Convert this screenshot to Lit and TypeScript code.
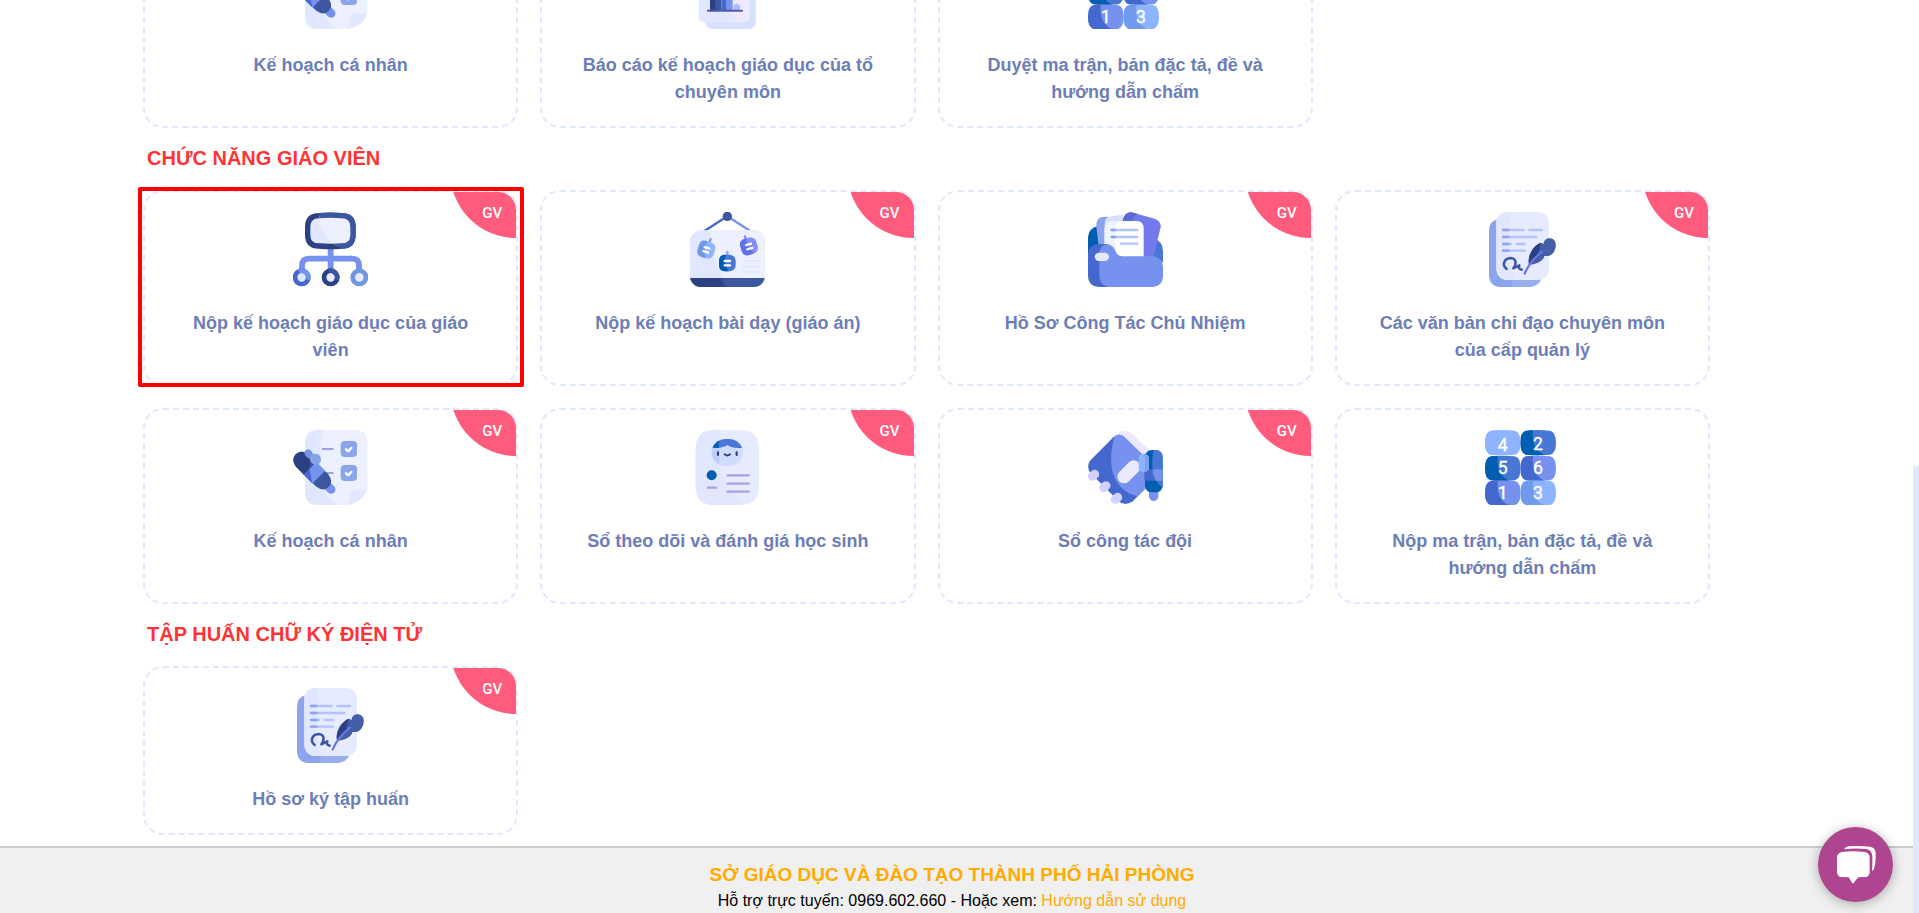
import { LitElement, html, css, nothing, type TemplateResult } from "lit";
import { customElement, property } from "lit/decorators.js";

const orgIcon = html`<svg viewBox="0 0 225 225" aria-hidden="true">
  <defs><clipPath id="org"><path d="M80 0C74 42 92 88 152 112H225V0Z" /></clipPath></defs>
  <path d="M27 180V162Q27 140 48 140H178Q198 140 198 162V180M113 108V180" fill="none" stroke="#7692ee" stroke-width="17.5" />
  <path d="M44 45Q44 11 78 11Q112 8 146 11Q180 11 180 45V68Q180 102 146 102Q112 105 78 102Q44 102 44 68Z" fill="#e1e7ff" stroke="#2c4184" stroke-width="16" />
  <path clip-path="url(#org)" d="M44 45Q44 11 78 11Q112 8 146 11Q180 11 180 45V68Q180 102 146 102Q112 105 78 102Q44 102 44 68Z" fill="#edf0fe" stroke="#3c56a0" stroke-width="16" />
  <circle cx="26" cy="196" r="20" fill="#e1e7ff" stroke="#4468cd" stroke-width="14" />
  <path d="M18 178A20 20 0 0 1 45 203" fill="none" stroke="#7692ee" stroke-width="14" />
  <circle cx="113" cy="196" r="20" fill="#e6ebff" stroke="#2c4184" stroke-width="14" />
  <path d="M107 177A20 20 0 0 1 131 203" fill="none" stroke="#3c56a0" stroke-width="14" />
  <circle cx="199" cy="196" r="20" fill="#e6ebff" stroke="#7294e1" stroke-width="14" />
</svg>`;

const boardIcon = html`<svg viewBox="0 0 225 225" aria-hidden="true">
  <defs><clipPath id="board"><rect y="55" width="225" height="170" rx="33" /></clipPath></defs>
  <path d="M112 13L42 58" stroke="#4468cd" stroke-width="7" />
  <path d="M112 13L182 58" stroke="#7692ee" stroke-width="7" />
  <circle cx="112" cy="13" r="14" fill="#3c56a0" />
  <g clip-path="url(#board)">
    <path d="M0 50H225V198H0Z" fill="#e1e7ff" />
    <path d="M62 50C62 110 72 160 102 198H225V50Z" fill="#edf0fe" />
    <path d="M0 198H225V225H0Z" fill="#3c56a0" />
    <path d="M0 198H92Q99 213 108 225H0Z" fill="#2c4184" />
  </g>
  <path d="M160 147H209M160 164H209M160 180H209" stroke="#e1e7ff" stroke-width="6" stroke-linecap="round" />
  <g transform="translate(49 113) rotate(17)">
    <path d="M3 -25V-34" stroke="#7aa0ee" stroke-width="7" stroke-linecap="round" />
    <rect x="-25" y="-25" width="50" height="50" rx="18" fill="#8fb4ff" />
    <path d="M-7 -25Q-25 -25 -25 -7V7Q-25 25 -7 25H6Q-10 0 -4 -25Z" fill="#6f99ea" />
    <path d="M-7 -6H8M-7 7H8" stroke="#fff" stroke-width="7" stroke-linecap="round" />
  </g>
  <g transform="translate(112 153)">
    <path d="M0 -25V-33" stroke="#8fa5f2" stroke-width="7" stroke-linecap="round" />
    <rect x="-25" y="-25" width="50" height="50" rx="18" fill="#4877d6" />
    <path d="M-7 -25Q-25 -25 -25 -7V7Q-25 25 -7 25H4Q-12 0 -6 -25Z" fill="#005eb1" />
    <path d="M-8 -6H8M-8 7H8" stroke="#fff" stroke-width="7" stroke-linecap="round" />
  </g>
  <g transform="translate(177 103) rotate(-17)">
    <path d="M-3 -25V-32" stroke="#7e8cf4" stroke-width="7" stroke-linecap="round" />
    <rect x="-25" y="-25" width="50" height="50" rx="18" fill="#858cff" />
    <path d="M-7 -25Q-25 -25 -25 -7V7Q-25 25 -7 25H8Q-6 0 -2 -25Z" fill="#5f70ec" />
    <path d="M-7 -6H8M-7 7H8" stroke="#fff" stroke-width="7" stroke-linecap="round" />
  </g>
</svg>`;

const folderIcon = html`<svg viewBox="0 0 225 225" aria-hidden="true">
  <path d="M0 130V76Q2 48 30 42L60 120Z" fill="#005eb1" />
  <path d="M195 78Q225 88 225 116V150H180Z" fill="#4877d6" />
  <path d="M25 44Q23 20 42 15L60 14V120H34Z" fill="#8ca4ec" />
  <path d="M50 40Q48 20 62 14L106 7L104 60L50 110Z" fill="#d7e0ff" />
  <path d="M104 26Q110 0 130 1L200 20Q220 27 218 46L196 136H104Z" fill="#737aec" />
  <path d="M104 26Q110 0 130 1L150 6Q134 12 132 30H104Z" fill="#5b69d6" />
  <path d="M50 50Q52 27 74 27H146Q167 28 167 48V136H50Z" fill="#fff" />
  <path d="M50 50Q52 30 72 27H98Q82 32 81 50V136H50Z" fill="#edf3ff" />
  <path d="M71 54H148M71 75H148M99 95H148" stroke="#b2c3fb" stroke-width="7" stroke-linecap="round" />
  <path d="M71 54H81M71 75H81" stroke="#86a3ea" stroke-width="7" stroke-linecap="round" />
  <path d="M0 130Q0 98 30 96H60V225H32Q0 222 0 192Z" fill="#4468cd" />
  <path d="M34 128Q34 98 58 96Q76 100 82 116Q88 133 104 133H193Q225 136 225 166V192Q224 223 193 225H66Q36 223 34 192Z" fill="#7692ee" />
  <rect x="20" y="122" width="43" height="25" rx="12.500" fill="#e4e9ff" />
</svg>`;

const letterIcon = html`<svg viewBox="0 0 225 225" aria-hidden="true">
  <path d="M12 56Q12 26 40 22H168V190Q160 225 130 225H46Q12 222 12 188Z" fill="#8ca4ec" />
  <path d="M80 200H170Q160 225 130 225H82Z" fill="#99aeec" />
  <rect x="34" y="0" width="158" height="204" rx="33" fill="#e6ebff" />
  <path d="M67 0Q34 2 34 33V171Q36 202 67 204H90Q60 100 79 0Z" fill="#e1e7ff" />
  <path d="M54 54H116M133 54H171M54 75H154M54 96H78M95 96H120M54 116H120" stroke="#b2c3fb" stroke-width="7" stroke-linecap="round" />
  <path d="M54 54H70M54 75H70M54 96H70M54 116H70" stroke="#8ca4ec" stroke-width="7" stroke-linecap="round" />
  <path d="M65 171C49 158 58 139 77 138C95 140 95 155 85 169L103 160Q98 170 110 173" fill="none" stroke="#3c56a0" stroke-width="7.500" stroke-linecap="round" stroke-linejoin="round" />
  <path d="M132 158C126 128 148 98 168 92L176 96C176 82 188 77 198 79C216 84 216 106 205 122C196 134 186 132 178 132C176 148 152 158 132 158Z" fill="#455fa6" />
  <path d="M132 158C126 128 148 98 168 92C160 110 168 126 132 158Z" fill="#2c4184" />
  <path d="M119 185Q134 148 171 119" fill="none" stroke="#6a72e8" stroke-width="6.500" stroke-linecap="round" />
</svg>`;

const checklistIcon = html`<svg viewBox="0 0 225 225" aria-hidden="true">
  <path d="M36 34Q38 4 68 0H190Q220 2 223 32V176Q214 214 164 225H70Q38 222 36 192Z" fill="#edf1ff" />
  <path d="M36 34Q38 4 68 0H90C74 70 80 150 130 222L164 225H70Q38 222 36 192Z" fill="#e1e7ff" />
  <path d="M88 100L175 190Q165 220 150 225Q116 228 88 170Z" fill="#edf1ff" />
  <path d="M223 176C200 186 178 170 172 192Q170 216 160 225Q208 218 223 176Z" fill="#e1e7ff" />
  <path d="M89 57H119M95 129H119" stroke="#9fa3e3" stroke-width="6.500" stroke-linecap="round" />
  <rect x="143" y="33" width="49" height="48" rx="12" fill="#8ca4ec" />
  <rect x="143" y="105" width="49" height="48" rx="12" fill="#8ca4ec" />
  <path d="M159 58L165 64L175 54M159 130L165 136L175 126" fill="none" stroke="#fff" stroke-width="7" stroke-linecap="round" stroke-linejoin="round" />
  <g transform="translate(28 92) rotate(45)">
    <path d="M90 0H122" stroke="#7692ee" stroke-width="26" stroke-linecap="round" />
    <path d="M68 -26H84Q112 -22 112 0Q112 22 84 26H68Z" fill="#3c56a0" />
    <path d="M30 -27H70V27H30Z" fill="#7692ee" />
    <path d="M30 0Q48 14 68 26V27H30Z" fill="#4468cd" />
    <path d="M32 -27H0Q-27 -24 -28 0Q-27 24 0 27H32Z" fill="#2c4184" />
    <path d="M32 -27H10L32 2Z" fill="#3c56a0" />
  </g>
  <path d="M34 66Q42 54 54 62L60 72Q84 68 84 90Q80 108 62 103Q52 98 50 86Q36 80 34 66Z" fill="#86a3e6" />
  <path d="M34 66Q42 54 54 62L60 72Q50 76 50 86Q36 80 34 66Z" fill="#7294e1" />
</svg>`;

const profileIcon = html`<svg viewBox="0 0 225 225" aria-hidden="true">
  <defs><clipPath id="face"><rect x="65" y="27" width="94" height="81" rx="43" ry="40" /></clipPath></defs>
  <path d="M17 60Q17 6 60 1Q112 -2 164 1Q207 6 207 60V165Q207 219 164 224Q112 227 60 224Q17 219 17 165Z" fill="#e6ebff" />
  <path d="M60 1Q80 0 90 0C84 80 90 170 158 224Q112 227 60 224Q17 219 17 165V60Q17 6 60 1Z" fill="#e1e7ff" />
  <g clip-path="url(#face)">
    <path d="M60 20H165V115H60Z" fill="#d1dbfb" />
    <path d="M60 20H88V115H60Z" fill="#bfcdfa" />
    <path d="M60 20H165V52Q130 58 112 45Q96 57 60 52Z" fill="#4877d6" />
    <path d="M60 20H90Q85 34 87 54L60 52Z" fill="#005eb1" />
  </g>
  <path d="M84 67V75M140 67V75" stroke="#2c4184" stroke-width="6.500" stroke-linecap="round" />
  <path d="M104 73Q112 80 120 73" fill="none" stroke="#2c4184" stroke-width="6" stroke-linecap="round" />
  <circle cx="65" cy="136" r="15" fill="#005eb1" />
  <path d="M54 173H78M113 136H176M113 161H176M113 185H176" stroke="#9fa3e3" stroke-width="7" stroke-linecap="round" />
</svg>`;

const notebookIcon = html`<svg viewBox="0 0 225 225" aria-hidden="true">
  <path d="M86 16Q104 -6 128 8L188 62L160 110Z" fill="#ebe9ff" />
  <path d="M76 22Q94 8 108 20L176 86V172L134 214Q112 230 92 214L8 130Q-6 112 6 92Z" fill="#4468cd" />
  <path d="M80 18Q96 10 108 20L176 86V172L149 199C86 186 50 120 80 18Z" fill="#7692ee" />
  <g stroke-linecap="round">
    <path d="M108 140L137 111" stroke="#ebe9ff" stroke-width="40" />
    <path d="M13 139L20 133M47 173L54 167M82 208L89 202" stroke="#d2d1ff" stroke-width="27" />
  </g>
  <path d="M183 180H211V200Q208 213 197 213Q186 213 183 200Z" fill="#7692ee" />
  <rect x="171" y="60" width="53" height="127" rx="20" fill="#005eb1" />
  <path d="M197 60H204Q222 62 224 80V172C196 156 186 110 197 60Z" fill="#4877d6" />
  <path d="M169 118H194Q194 138 203 152H169Z" fill="#4468cd" />
  <path d="M193 118H224V152H203Q194 138 193 118Z" fill="#7692ee" />
  <rect x="152" y="71" width="31" height="56" rx="15" fill="#8fb4ff" />
  <path d="M168 71Q183 74 183 88V110Q180 122 168 127Q176 100 168 71Z" fill="#7aa2f0" />
</svg>`;

interface Tile { digit: string; x: number; y: number; base: number; dark: string; light: string }
const tiles: Tile[] = [
  { digit: "4", x: 0, y: 0, base: 63, dark: "#8fb4ff", light: "#8fb4ff" },
  { digit: "2", x: 106, y: 0, base: 60, dark: "#005eb1", light: "#4877d6" },
  { digit: "5", x: 0, y: 77, base: 133, dark: "#005eb1", light: "#4877d6" },
  { digit: "6", x: 106, y: 77, base: 133, dark: "#4468cd", light: "#7692ee" },
  { digit: "1", x: 0, y: 151, base: 206, dark: "#4468cd", light: "#7692ee" },
  { digit: "3", x: 106, y: 151, base: 206, dark: "#709aeb", light: "#8fb4ff" },
];
const numbersIcon = html`<svg viewBox="0 0 225 225" aria-hidden="true">
  ${tiles.map((t) => html`<svg x=${t.x} y=${t.y} width="107" height="77" viewBox="0 0 107 77">
    <path d="M0 38Q0 6 18 2Q54 -2 89 2Q107 6 107 38Q107 70 89 74Q54 78 18 74Q0 70 0 38Z" fill=${t.light} />
    <path d="M18 2Q28 1 38 1C36 36 42 60 72 75Q44 78 18 74Q0 70 0 38Q0 6 18 2Z" fill=${t.dark} />
  </svg>`)}
  ${tiles.map((t) => html`<svg overflow="visible"><text class="digit" x=${t.x + 53} y=${t.base}>${t.digit}</text></svg>`)}
</svg>`;

const reportIcon = html`<svg viewBox="0 0 225 225" aria-hidden="true">
  <rect x="46" y="20" width="151" height="205" rx="20" fill="#d7e0ff" />
  <rect x="26" y="0" width="153" height="206" rx="20" fill="#e1e7ff" />
  <path d="M100 90H179V186Q178 204 162 206H146Q112 180 100 90Z" fill="#edeaff" />
  <path d="M60 80H78V170H60Z" fill="#2c4184" />
  <path d="M76 80H94V170H76Z" fill="#3c56a0" />
  <path d="M94 100H110V170H94Z" fill="#4468cd" />
  <path d="M110 100H128V170H110Z" fill="#7692ee" />
  <path d="M130 170V156Q140 142 150 156V170Z" fill="#a9bdf6" />
  <path d="M54 170H156" stroke="#5457a8" stroke-width="6" stroke-linecap="round" />
</svg>`;

interface CardItem { title: string; icon: TemplateResult; badge?: string; marked?: boolean }
interface Section { heading?: string; items: CardItem[] }

const sections: Section[] = [
  {
    items: [
      { title: "Kế hoạch cá nhân", icon: checklistIcon },
      { title: "Báo cáo kế hoạch giáo dục của tổ chuyên môn", icon: reportIcon },
      { title: "Duyệt ma trận, bản đặc tả, đề và hướng dẫn chấm", icon: numbersIcon },
    ],
  },
  {
    heading: "CHỨC NĂNG GIÁO VIÊN",
    items: [
      { title: "Nộp kế hoạch giáo dục của giáo viên", icon: orgIcon, badge: "GV", marked: true },
      { title: "Nộp kế hoạch bài dạy (giáo án)", icon: boardIcon, badge: "GV" },
      { title: "Hồ Sơ Công Tác Chủ Nhiệm", icon: folderIcon, badge: "GV" },
      { title: "Các văn bản chỉ đạo chuyên môn của cấp quản lý", icon: letterIcon, badge: "GV" },
      { title: "Kế hoạch cá nhân", icon: checklistIcon, badge: "GV" },
      { title: "Sổ theo dõi và đánh giá học sinh", icon: profileIcon, badge: "GV" },
      { title: "Sổ công tác đội", icon: notebookIcon, badge: "GV" },
      { title: "Nộp ma trận, bản đặc tả, đề và hướng dẫn chấm", icon: numbersIcon },
    ],
  },
  {
    heading: "TẬP HUẤN CHỮ KÝ ĐIỆN TỬ",
    items: [{ title: "Hồ sơ ký tập huấn", icon: letterIcon, badge: "GV" }],
  },
];

@customElement("function-card")
export class FunctionCard extends LitElement {
  @property({ attribute: false }) item!: CardItem;

  static styles = css`
    :host {
      display: block;
      position: relative;
    }
    .card {
      box-sizing: border-box;
      display: flex;
      flex-direction: column;
      align-items: center;
      gap: 23px;
      height: 100%;
      padding: 20px 32px;
      position: relative;
      overflow: hidden;
      border: 2px dashed #e1e7ff;
      border-radius: 20px;
      text-decoration: none;
      color: #6c7eb7;
    }
    .icon {
      width: 75px;
      height: 75px;
    }
    .icon svg {
      display: block;
    }
    .digit {
      font: 400 53px Roboto, sans-serif;
      fill: #fff;
      stroke: #fff;
      stroke-width: 1px;
      text-anchor: middle;
    }
    .title {
      font-size: 18px;
      font-weight: 700;
      line-height: 27px;
      text-align: center;
    }
    .badge {
      box-sizing: border-box;
      position: absolute;
      top: 0;
      right: 0;
      width: 63px;
      height: 46px;
      padding-right: 14px;
      background: #ff5b7d;
      clip-path: circle(66px at 63px -20px);
      color: #fff;
      font: 500 15px/43px Roboto, sans-serif;
      text-align: right;
    }
    .mark {
      position: absolute;
      inset: -3px -6px -1px -5px;
      border: 4px solid #f00;
      border-radius: 2px;
      pointer-events: none;
    }
  `;

  render() {
    const { title, icon, badge, marked } = this.item;
    return html`
      <a class="card" href="#">
        <span class="icon">${icon}</span>
        <span class="title">${title}</span>
        ${badge ? html`<span class="badge">${badge}</span>` : nothing}
      </a>
      ${marked ? html`<span class="mark"></span>` : nothing}
    `;
  }
}

@customElement("app-root")
export class AppRoot extends LitElement {
  static styles = css`
    :host {
      display: grid;
      grid-template-columns: minmax(0, 1fr) 6px;
      height: 100vh;
      overflow: hidden;
      background: #fff;
      font-family: "Liberation Sans", Arial, sans-serif;
    }
    .page {
      display: flex;
      flex-direction: column;
      justify-content: flex-end;
      min-height: 0;
      height: 100vh;
    }
    .content {
      flex: none;
      padding: 0 203px 11px 143px;
    }
    .heading {
      margin: 15px 4px 17px;
      font-size: 20px;
      line-height: 30px;
      font-weight: 700;
      color: #f33;
    }
    .cards {
      display: grid;
      grid-template-columns: repeat(4, minmax(0, 1fr));
      gap: 22px;
      margin: 0;
      padding: 0;
      list-style: none;
    }
    .cell {
      display: grid;
    }
    .footer {
      flex: none;
      padding: 13px 9px 0 0;
      border-top: 2px solid #ccc;
      background: #f0f0f0;
      text-align: center;
      font-size: 16px;
      line-height: 25px;
      color: #000;
    }
    .office {
      margin: 0;
      font-size: 19px;
      line-height: 27px;
      font-weight: 700;
      color: #ffab00;
    }
    .support {
      margin: 0;
    }
    .guide {
      color: #ffab00;
      text-decoration: none;
    }
    .rail {
      display: flex;
      align-items: flex-end;
    }
    .thumb {
      width: 100%;
      height: 49%;
      background: #e1e7ff;
    }
    .chat {
      position: fixed;
      right: 26px;
      bottom: 11px;
      width: 75px;
      height: 75px;
      padding: 0;
      border: 0;
      border-radius: 50%;
      background: #af4490;
      box-shadow: 0 2px 12px rgba(0, 0, 0, 0.3);
      cursor: pointer;
    }
    .chat svg {
      display: block;
    }
  `;

  render() {
    return html`
      <div class="page">
        <main class="content">
          ${sections.map(
            (s) => html`<section>
              ${s.heading ? html`<h2 class="heading">${s.heading}</h2>` : nothing}
              <ul class="cards">
                ${s.items.map((i) => html`<li class="cell"><function-card .item=${i}></function-card></li>`)}
              </ul>
            </section>`,
          )}
        </main>
        <footer class="footer">
          <p class="office">SỞ GIÁO DỤC VÀ ĐÀO TẠO THÀNH PHỐ HẢI PHÒNG</p>
          <p class="support">Hỗ trợ trực tuyến: 0969.602.660 - Hoặc xem: <a class="guide" href="#">Hướng dẫn sử dụng</a></p>
        </footer>
      </div>
      <div class="rail" aria-hidden="true"><div class="thumb"></div></div>
      <button class="chat" type="button" aria-label="Chat">
        <svg viewBox="0 0 225 225" aria-hidden="true" fill="#fff">
          <path d="M57 92Q57 78 72 75Q106 71 140 75Q155 78 155 92V134Q155 149 142 150L121 151Q114 158 108 167Q105 170 102 167Q97 158 92 151L71 150Q57 149 57 134Z" />
          <path d="M78 67Q82 59 92 58Q124 55 156 59Q172 61 173 77Q174 106 168 125Q166 130 162 132Q164 108 163 88Q162 68 144 66Q110 62 78 67Z" />
        </svg>
      </button>
    `;
  }
}
